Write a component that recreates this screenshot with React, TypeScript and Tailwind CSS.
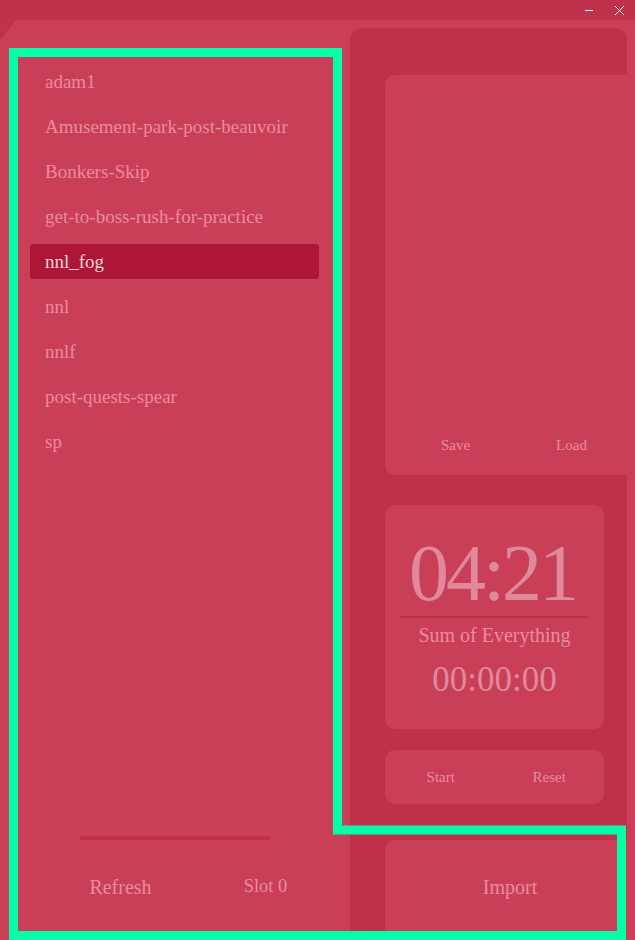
import React from "react";

const saves = [
  "adam1",
  "Amusement-park-post-beauvoir",
  "Bonkers-Skip",
  "get-to-boss-rush-for-practice",
  "nnl_fog",
  "nnl",
  "nnlf",
  "post-quests-spear",
  "sp",
];

// barra de título da janela
function TitleBar() {
  return (
    <div className="h-[20px] shrink-0 flex items-center justify-end bg-[#c0314b]">
      <svg width="10" height="10" viewBox="0 0 10 10" className="mr-[20px]">
        <path d="M1 5.5 H9" stroke="#ffffff" strokeWidth="1" />
      </svg>
      <svg width="11" height="11" viewBox="0 0 11 11" className="mr-[10px]">
        <path d="M1 1 L10 10 M10 1 L1 10" stroke="#ffffff" strokeWidth="1" />
      </svg>
    </div>
  );
}

function SaveList() {
  return (
    <div className="flex flex-col gap-[10px] pt-[44px]">
      {saves.map((name) => (
        <div
          key={name}
          className={
            name === "nnl_fog"
              ? "ml-[30px] w-[289px] h-[35px] pl-[15px] rounded-[3px] bg-[#ae1637] text-[#f2d4db] text-[19px] leading-[35px]"
              : "ml-[30px] w-[289px] h-[35px] pl-[15px] text-[#e98b9f] text-[19px] leading-[35px]"
          }
        >
          {name}
        </div>
      ))}
    </div>
  );
}

function LeftPanel() {
  return (
    <div className="w-[350px] shrink-0 flex flex-col">
      <SaveList />
      <div className="mt-auto ml-[80px] w-[190px] h-[4px] bg-[#bf314b]" />
      <div className="mt-[22px] mb-[28px] ml-[48px] w-[290px] h-[50px] grid grid-cols-2 items-center text-center text-[#e98b9f]">
        <span className="text-[20px]">Refresh</span>
        <span className="text-[18.5px]">Slot 0</span>
      </div>
    </div>
  );
}

function TimerCard() {
  return (
    <div className="ml-[35px] w-[219px] h-[224px] rounded-[10px] bg-[#c93f58] flex flex-col items-center">
      <div className="mt-[28px] pr-[4px] text-[80px] leading-[80px] tracking-[-3px] text-[#e0899c]">04:21</div>
      <div className="mt-[3px] w-[189px] h-[2px] bg-[#bf314b]" />
      <div className="mt-[5px] text-[20px] leading-[24px] text-[#e98b9f]">Sum of Everything</div>
      <div className="mt-[13px] text-[35px] leading-[40px] text-[#e0899c]">00:00:00</div>
    </div>
  );
}

function RightColumn() {
  return (
    <div className="mt-[8px] w-[277px] rounded-t-[12px] bg-[#bf314b] flex flex-col">
      <div className="h-[47px]" />
      <div className="ml-[35px] w-[250px] h-[400px] rounded-l-[10px] bg-[#c93f58] flex flex-col justify-end">
        <div className="mb-[21px] grid grid-cols-2 text-center text-[15px] leading-[18px] text-[#e98b9f]">
          <span className="pl-[16px]">Save</span>
          <span className="pr-[2px]">Load</span>
        </div>
      </div>
      <div className="h-[30px]" />
      <TimerCard />
      <div className="mt-[21px] ml-[35px] w-[219px] h-[54px] rounded-[10px] bg-[#c93f58] grid grid-cols-2 items-center text-center text-[15px] text-[#e98b9f]">
        <span className="pl-[2px]">Start</span>
        <span>Reset</span>
      </div>
      <div className="mt-[36px] ml-[35px] w-[250px] flex-1 pb-[6px] rounded-tl-[10px] bg-[#c93f58] flex items-center justify-center text-[20px] text-[#e98b9f]">
        Import
      </div>
    </div>
  );
}

export default function App() {
  return (
    <div className="relative w-[635px] h-[940px] overflow-hidden flex flex-col bg-[#c0314b] [font-family:'Liberation_Serif',serif]">
      <TitleBar />
      <div className="flex-1 flex bg-[#c93f58] [clip-path:polygon(16px_0,100%_0,100%_100%,0_100%,0_20px)]">
        <LeftPanel />
        <RightColumn />
      </div>
      {/* contorno verde de destaque */}
      <svg
        width="635"
        height="940"
        viewBox="0 0 635 940"
        className="absolute top-0 left-0 pointer-events-none"
      >
        <path
          d="M13.5 52.5 H337.5 V830 H621.5 V935.5 H13.5 Z"
          fill="none"
          stroke="#05ffa6"
          strokeWidth="9"
          strokeLinejoin="miter"
        />
      </svg>
    </div>
  );
}
